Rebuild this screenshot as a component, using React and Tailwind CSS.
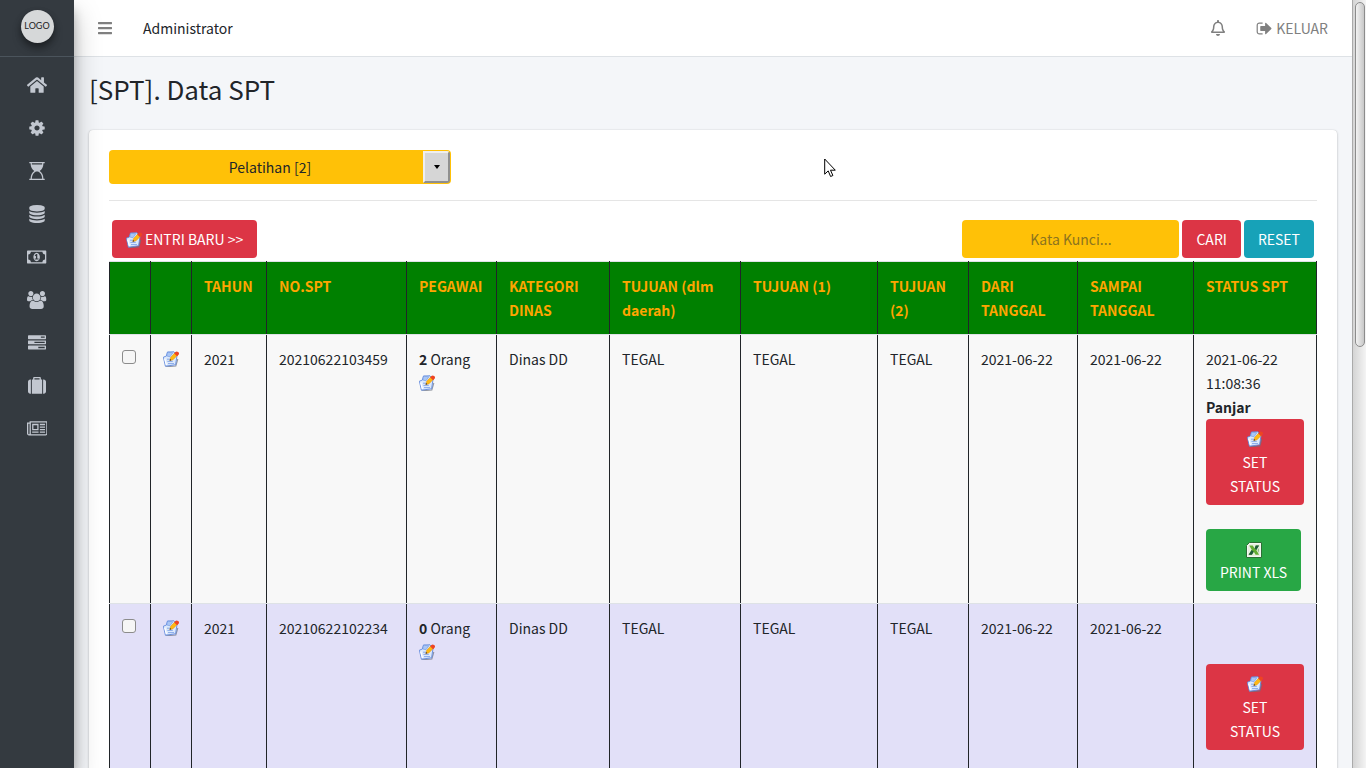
import React from "react";
import { FaHome, FaBars, FaRegBell } from "react-icons/fa";

const icons = {
  cog: [1792, "M1152 896q0-106-75-181t-181-75-181 75-75 181 75 181 181 75 181-75 75-181zm512-109v222q0 12-8 23t-20 13l-185 28q-19 54-39 91 35 50 107 138 10 12 10 25t-9 23q-27 37-99 108t-94 71q-12 0-26-9l-138-108q-44 23-91 38-16 136-29 186-7 28-36 28h-222q-14 0-24.5-8.5t-11.5-21.5l-28-184q-49-16-90-37l-141 107q-10 9-25 9-14 0-25-11-126-114-165-168-7-10-7-23 0-12 8-23 15-21 51-66.5t54-70.5q-27-50-41-99l-183-27q-13-2-21-12.5t-8-23.5v-222q0-12 8-23t19-13l186-28q14-46 39-92-40-57-107-138-10-12-10-24 0-10 9-23 26-36 98.5-107.5t94.5-71.5q13 0 26 10l138 107q44-23 91-38 16-136 29-186 7-28 36-28h222q14 0 24.5 8.5t11.5 21.5l28 184q49 16 90 37l142-107q9-9 24-9 13 0 25 10 129 119 165 170 7 8 7 22 0 12-8 23-15 21-51 66.5t-54 70.5q26 50 41 98l183 28q13 2 21 12.5t8 23.5z"],
  hourglass: [1792, "M1536 128q0 261-106.5 461.5t-266.5 306.5q160 106 266.5 306.5t106.5 461.5h96q14 0 23 9t9 23v64q0 14-9 23t-23 9h-1472q-14 0-23-9t-9-23v-64q0-14 9-23t23-9h96q0-261 106.5-461.5t266.5-306.5q-160-106-266.5-306.5t-106.5-461.5h-96q-14 0-23-9t-9-23v-64q0-14 9-23t23-9h1472q14 0 23 9t9 23v64q0 14-9 23t-23 9h-96zM1408 128h-1024q0 66 9 128h1006q9-61 9-128zM1002 956h-212q-77 29-149 92.5t-129.5 152.5-92.5 210-35 253h1024q0-132-35-253t-92.5-210-129.5-152.5-149-92.5z"],
  database: [1792, "M896 768q237 0 443-43t325-127v170q0 69-103 128t-280 93.5-385 34.5-385-34.5-280-93.5-103-128v-170q119 84 325 127t443 43zm0 768q237 0 443-43t325-127v170q0 69-103 128t-280 93.5-385 34.5-385-34.5-280-93.5-103-128v-170q119 84 325 127t443 43zm0-384q237 0 443-43t325-127v170q0 69-103 128t-280 93.5-385 34.5-385-34.5-280-93.5-103-128v-170q119 84 325 127t443 43zm0-1152q208 0 385 34.5t280 93.5 103 128v128q0 69-103 128t-280 93.5-385 34.5-385-34.5-280-93.5-103-128v-128q0-69 103-128t280-93.5 385-34.5z"],
  money: [1920, "M768 1152h384v-96h-128v-448h-114l-148 137 77 80q42-37 55-57h2v288h-128v96zm512-256q0 70-21 142t-59.5 134-101.5 101-138 39-138-39-101.5-101-59.5-134-21-142 21-142 59.5-134 101.5-101 138-39 138 39 101.5 101 59.5 134 21 142zm512 256v-512q-106 0-181-75t-75-181h-1152q0 106-75 181t-181 75v512q106 0 181 75t75 181h1152q0-106 75-181t181-75zm128-832v1152q0 26-19 45t-45 19h-1792q-26 0-45-19t-19-45v-1152q0-26 19-45t45-19h1792q26 0 45 19t19 45z"],
  users: [1920, "M593 896q-162 5-265 128h-134q-82 0-138-40.5t-56-118.5q0-353 124-353 6 0 43.5 21t97.5 42.5 119 21.5q67 0 133-23-5 37-5 66 0 139 81 256zm1071 637q0 120-73 189.5t-194 69.5h-874q-121 0-194-69.5t-73-189.5q0-53 3.5-103.5t14-109 26.5-108.5 43-97.5 62-81 85.5-53.5 111.5-20q10 0 43 21.5t73 48 107 48 135 21.5 135-21.5 107-48 73-48 43-21.5q61 0 111.5 20t85.5 53.5 62 81 43 97.5 26.5 108.5 14 109 3.5 103.5zm-1024-1277q0 106-75 181t-181 75-181-75-75-181 75-181 181-75 181 75 75 181zm704 384q0 159-112.5 271.5t-271.5 112.5-271.5-112.5-112.5-271.5 112.5-271.5 271.5-112.5 271.5 112.5 112.5 271.5zm576 225q0 78-56 118.5t-138 40.5h-134q-103-123-265-128 81-117 81-256 0-29-5-66 66 23 133 23 59 0 119-21.5t97.5-42.5 43.5-21q124 0 124 353zm-128-609q0 106-75 181t-181 75-181-75-75-181 75-181 181-75 181 75 75 181z"],
  tasks: [1792, "M1024 1408h640v-128h-640v128zm-384-512h1024v-128h-1024v128zm640-512h384v-128h-384v128zm512 832v256q0 26-19 45t-45 19h-1664q-26 0-45-19t-19-45v-256q0-26 19-45t45-19h1664q26 0 45 19t19 45zm0-512v256q0 26-19 45t-45 19h-1664q-26 0-45-19t-19-45v-256q0-26 19-45t45-19h1664q26 0 45 19t19 45zm0-512v256q0 26-19 45t-45 19h-1664q-26 0-45-19t-19-45v-256q0-26 19-45t45-19h1664q26 0 45 19t19 45z"],
  suitcase: [1792, "M640 256h512v-128h-512v128zm-352 0v1408h-64q-92 0-158-66t-66-158v-960q0-92 66-158t158-66h64zm1120 0v1408h-1024v-1408h128v-160q0-40 28-68t68-28h576q40 0 68 28t28 68v160h128zm384 224v960q0 92-66 158t-158 66h-64v-1408h64q92 0 158 66t66 158z"],
  newspaper: [2048, "M1024 512h-384v384h384v-384zm128 640v128h-640v-128h640zm0-768v640h-640v-640h640zm640 768v128h-512v-128h512zm0-256v128h-512v-128h512zm0-256v128h-512v-128h512zm0-256v128h-512v-128h512zm-1536 960v-960h-128v960q0 26 19 45t45 19 45-19 19-45zm1664 0v-1088h-1536v1088q0 33-11 64h1483q26 0 45-19t19-45zm128-1216v1216q0 80-56 136t-136 56h-1664q-80 0-136-56t-56-136v-1088h256v-128h1792z"],
  signOut: [1792, "M704 1440q0 4 1 20t.5 26.5-3 23.5-10 19.5-20.5 6.5h-320q-119 0-203.5-84.5t-84.5-203.5v-704q0-119 84.5-203.5t203.5-84.5h320q13 0 22.5 9.5t9.5 22.5q0 4 1 20t.5 26.5-3 23.5-10 19.5-20.5 6.5h-320q-66 0-113 47t-47 113v704q0 66 47 113t113 47h312l11.5 1 11.5 3 8 5.5 7 9 2 13.5zm928-544q0 26-19 45l-544 544q-19 19-45 19t-45-19-19-45v-288h-448q-26 0-45-19t-19-45v-384q0-26 19-45t45-19h448v-288q0-26 19-45t45-19 45 19l544 544q19 19 19 45z"],
};

const menu = [
  ["Pengaturan", "cog"],
  ["Jadwal", "hourglass"],
  ["Master", "database"],
  ["Keuangan", "money"],
  ["Pegawai", "users"],
  ["Kegiatan", "tasks"],
  ["Perjalanan", "suitcase"],
  ["Laporan", "newspaper"],
];

function Glyph({ name, className = "h-[18px]" }) {
  const [width, d] = icons[name];
  return (
    <svg viewBox={`0 0 ${width} 1792`} className={`w-auto ${className}`} fill="currentColor" fillRule="evenodd" aria-hidden="true">
      <path d={d} />
    </svg>
  );
}

function EditIcon({ className = "" }) {
  return (
    <svg viewBox="0 0 16 16" className={`inline-block size-4 ${className}`} aria-hidden="true">
      <path d="M2.6 15.8 12.8 15 14.8 8" fill="none" stroke="#6b7280" strokeOpacity=".7" strokeWidth="1.2" />
      <path d="M4.5 1 11 .8 14 4.5 12.6 13.8 2.4 15.2.4 6.2 3.4 5z" fill="#dce9fb" stroke="#5f88dd" strokeWidth=".9" />
      <path d="M3.6 5 4.5 1.2 9.8 1.8 7 5.8z" fill="#a9c6f5" stroke="#5f88dd" strokeWidth=".5" />
      <path d="M1.6 7.5 3.4 14" stroke="#ffffff" strokeWidth="1.2" />
      <path d="M4 8.2h3M4.4 10.4h5.4M5 12.6h6" stroke="#7ea2e6" strokeWidth=".9" />
      <path d="m6.8 9.6 1-3.4 4.2-4.4 2.6 2.2-4.6 4.8z" fill="#fdb913" stroke="#e58a00" strokeWidth=".5" />
      <path d="m6.6 9.8.5-1.8 1.3 1.3z" fill="#30343c" />
      <path d="m11.2 2.6 1.2-1.5q1.2-1.1 2.7 0t.6 2.4l-1.6 1.7z" fill="#ee4423" />
    </svg>
  );
}

function ExcelIcon() {
  return (
    <svg viewBox="0 0 16 16" className="inline-block size-4" aria-hidden="true">
      <path d="M3.5.5h12v15H.5v-12z" fill="#f4f8f2" stroke="#2c6f35" />
      <path d="M2 14V4l2-2h10v12z" fill="#e6efdf" />
      <path d="M3.2 3.4h3.5l2 3 1-3h3.1L10.3 8l2.8 4.8H9.6l-1.8-3-1.8 3H2.6l3.1-5z" fill="#63ad32" />
      <path d="M9.8 3.4h3.4L10.3 8 8.6 6.3zM5.7 8l2 1.8-1.8 3H2.6z" fill="#1d5b3b" />
      <path d="M13 3v3l-1.5 2L13 11z" fill="#8fb88a" />
    </svg>
  );
}

const btn = "rounded-[4px] px-[14px] py-[7px] text-center text-white";

function Status({ row }) {
  return (
    <div className="flex flex-col items-start gap-6">
      <div className="w-full">
        <p className="h-12">{row.time}</p>
        {row.status && <strong className="block">{row.status}</strong>}
        <button className={`${btn} block w-full bg-[#dc3545]`}>
          <EditIcon className="align-[-3px]" />
          <br />
          SET
          <br />
          STATUS
        </button>
      </div>
      {row.status ? (
        <button className={`${btn} bg-[#28a745] whitespace-nowrap`}>
          <ExcelIcon />
          <br />
          PRINT XLS
        </button>
      ) : (
        <div className="h-6" />
      )}
    </div>
  );
}

const headings = ["", "", "TAHUN", "NO.SPT", "PEGAWAI", "KATEGORI DINAS", "TUJUAN (dlm daerah)", "TUJUAN (1)", "TUJUAN (2)", "DARI TANGGAL", "SAMPAI TANGGAL", "STATUS SPT"];
const columns = ["w-[41px]", "w-[41px]", "w-[75px]", "w-[140px]", "w-[90px]", "w-[113px]", "w-[131px]", "w-[137px]", "w-[91px]", "w-[109px]", "w-[116px]", "w-[123px]"];
const rows = [
  { no: "20210622103459", people: 2, time: "2021-06-22 11:08:36", status: "Panjar", bg: "bg-[#f8f8f8]" },
  { no: "20210622102234", people: 0, time: "", status: "", bg: "bg-[#e2e0f8]" },
];
const cell = "border-x border-x-[#212529] border-y border-y-[#dee2e6] p-3 text-left align-top";

function DataTable() {
  return (
    <table className="mt-[3px] w-full table-fixed border-collapse">
      <colgroup>
        {columns.map((c, i) => <col key={i} className={c} />)}
      </colgroup>
      <thead className="bg-[#008000] text-[#ffa500]">
        <tr>
          {headings.map((h, i) => <th key={i} scope="col" className={`${cell} font-bold`}>{h}</th>)}
        </tr>
      </thead>
      <tbody>
        {rows.map((r) => (
          <tr key={r.no} className={r.bg}>
            <td className={cell}>
              <input type="checkbox" aria-label={`Pilih ${r.no}`} className="mt-[3px] block size-[14px] appearance-none rounded-[3px] border border-[#8c8c8c] bg-[#f6f6f6]" />
            </td>
            <td className={cell}>
              <button aria-label={`Edit ${r.no}`} className="flex h-6 items-center"><EditIcon /></button>
            </td>
            <td className={cell}>2021</td>
            <td className={cell}>{r.no}</td>
            <td className={cell}>
              <strong>{r.people}</strong> Orang
              <button aria-label={`Pegawai ${r.no}`} className="flex h-6 items-center"><EditIcon /></button>
            </td>
            <td className={cell}>Dinas DD</td>
            <td className={cell}>TEGAL</td>
            <td className={cell}>TEGAL</td>
            <td className={cell}>TEGAL</td>
            <td className={cell}>2021-06-22</td>
            <td className={cell}>2021-06-22</td>
            <td className={cell}><Status row={r} /></td>
          </tr>
        ))}
      </tbody>
    </table>
  );
}

export default function App() {
  return (
    <div className="relative flex h-screen overflow-hidden bg-[#f4f6f9] font-['Source_Sans_Pro','Noto_Sans_CJK_SC',sans-serif] text-[14px] leading-6 text-[#212529]">
      <aside className="z-10 flex w-[74px] shrink-0 flex-col bg-[#343a40] text-[#c2c7d0] shadow-[0_14px_28px_rgba(0,0,0,0.25),0_10px_10px_rgba(0,0,0,0.22)]">
        <a href="#beranda" className="flex h-[57px] shrink-0 items-start justify-center border-b border-[#4b545c] pt-[10px]">
          <span className="flex size-[33px] items-center justify-center rounded-full bg-[#d6d8d9] pb-[2px] font-['Lato',sans-serif] text-[9px] text-[#222] shadow-[0_3px_6px_rgba(0,0,0,0.3),0_6px_10px_rgba(0,0,0,0.25)]">LOGO</span>
        </a>
        <nav className="flex flex-col items-center gap-[3px] pt-2">
          <a href="#home" aria-label="Home" className="flex h-10 w-full items-center justify-center"><FaHome className="size-5" /></a>
          {menu.map(([label, icon]) => (
            <a key={icon} href={`#${icon}`} aria-label={label} className="flex h-10 w-full items-center justify-center"><Glyph name={icon} /></a>
          ))}
        </nav>
      </aside>
      <div className="min-w-0 flex-1 overflow-hidden">
        <header className="flex h-[57px] items-center border-b border-[#dee2e6] bg-white pr-6 pl-[23px] text-[#808080]">
          <button aria-label="Menu"><FaBars className="size-4" /></button>
          <a href="#admin" className="ml-[30px] text-[#212529]">Administrator</a>
          <a href="#notifikasi" aria-label="Notifikasi" className="ml-auto"><FaRegBell className="size-4" /></a>
          <a href="#keluar" className="ml-[30px] flex items-center gap-[3px]"><Glyph name="signOut" className="h-[17px]" />KELUAR</a>
        </header>
        <main className="px-[15px]">
          <h1 className="pt-4 text-[26px] leading-8">[SPT]. Data SPT</h1>
          <section className="mt-[25px] rounded-[4px] bg-white px-5 pt-5 pb-5 shadow-[0_0_1px_rgba(0,0,0,0.2),0_1px_3px_rgba(0,0,0,0.2)]">
            <div className="relative w-[342px]">
              <select aria-label="Kategori" className="block h-[34px] w-full appearance-none rounded-[4px] bg-[#ffc107] pr-5 text-center [text-align-last:center] text-[#212529]">
                <option>Pelatihan [2]</option>
              </select>
              <span aria-hidden="true" className="pointer-events-none absolute inset-y-px right-px flex w-[27px] items-center justify-center rounded-r-[3px] border-2 border-t-[#efefef] border-r-[#8f8f8f] border-b-[#8f8f8f] border-l-[#efefef] bg-[#d6d6d6]">
                <svg viewBox="0 0 6 4" className="h-1 w-[6px]"><path d="M0 0h6L3 4z" fill="#000" /></svg>
              </span>
            </div>
            <hr className="mt-4 border-[#e5e5e5]" />
            <div className="mt-[19px] flex items-center justify-between px-[3px]">
              <button className={`${btn} flex items-center gap-[3px] bg-[#dc3545]`}><EditIcon className="mt-[2px]" />ENTRI BARU &gt;&gt;</button>
              <form className="flex gap-[3px]">
                <input type="text" aria-label="Kata Kunci" placeholder="Kata Kunci..." className="h-[38px] w-[217px] rounded-[4px] bg-[#ffc107] text-center placeholder:text-[#8c741f]" />
                <button type="button" className={`${btn} bg-[#dc3545]`}>CARI</button>
                <button type="button" className={`${btn} bg-[#17a2b8]`}>RESET</button>
              </form>
            </div>
            <DataTable />
          </section>
        </main>
      </div>
      <div aria-hidden="true" className="flex w-[14px] shrink-0 justify-center border-l border-[#aaa] bg-linear-to-r from-[#d4d4d4] to-[#f4f4f4] pt-[2px]">
        <div className="h-[345px] w-[10px] rounded-full border border-[#8c8c8c] bg-linear-to-r from-[#f2f2f2] to-[#c8c8c8]" />
      </div>
      <svg aria-hidden="true" viewBox="0 0 12 20" className="pointer-events-none absolute top-[158px] left-[824px] h-5 w-3">
        <path d="M.7 1v15.2l3.5-3.3 2.4 5.6 2.3-1-2.4-5.3h4.8z" fill="#fff" stroke="#000" />
      </svg>
    </div>
  );
}
